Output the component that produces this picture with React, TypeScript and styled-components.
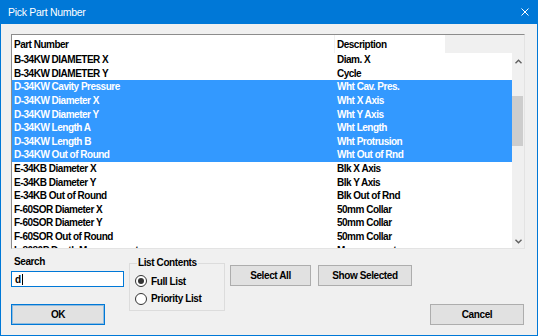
import styled, { createGlobalStyle } from "styled-components"

const GlobalStyle = createGlobalStyle`
  html, body {
    margin: 0;
    padding: 0;
    background: #f0f0f0;
  }
  * {
    box-sizing: border-box;
  }
`

const Window = styled.div`
  width: 538px;
  height: 336px;
  display: flex;
  flex-direction: column;
  background-color: #f0f0f0;
  border: 1px solid #0078d7;
  border-top: 0;
  font-family: "Liberation Sans", Arial, sans-serif;
  font-size: 10px;
  color: #000;
  overflow: hidden;
`

const TitleBar = styled.div`
  height: 24px;
  flex-shrink: 0;
  display: flex;
  align-items: center;
  justify-content: space-between;
  background-color: #0078d7;
  color: #ffffff;
  padding: 0 8px 0 7px;
  font-size: 10.5px;
  letter-spacing: -0.3px;
`

const Client = styled.div`
  flex: 1;
  display: flex;
  flex-direction: column;
  padding: 10px 12px 0 10px;
`

const ListBox = styled.div`
  height: 215px;
  flex-shrink: 0;
  display: flex;
  flex-direction: column;
  border: 1px solid;
  border-color: #8c8c8c #e3e3e3 #e3e3e3 #8c8c8c;
  background-color: #ffffff;
  font-weight: bold;
  letter-spacing: -0.5px;
`

const HeaderRow = styled.div`
  height: 18px;
  flex-shrink: 0;
  display: flex;
  background-color: #f0f0f0;
`

const HeaderCell = styled.div<{ $width: number }>`
  width: ${(p) => p.$width}px;
  display: flex;
  align-items: center;
  padding-left: 2px;
  background-color: #ffffff;
  border-right: 1px solid #f0f0f0;
`

const Body = styled.div`
  flex: 1;
  display: flex;
  min-height: 0;
`

const Rows = styled.div`
  flex: 1;
  overflow: hidden;
`

const Row = styled.div<{ $selected?: boolean }>`
  height: 13.6px;
  display: flex;
  align-items: center;
  white-space: nowrap;
  background-color: ${(p) => (p.$selected ? "#3399ff" : "transparent")};
  color: ${(p) => (p.$selected ? "#ffffff" : "#000000")};
`

const Cell = styled.div<{ $width?: number }>`
  ${(p) => (p.$width ? `width: ${p.$width}px;` : "flex: 1;")}
  padding-left: 2px;
  overflow: hidden;
`

const ScrollBar = styled.div`
  width: 12px;
  display: flex;
  flex-direction: column;
  background-color: #f0f0f0;
`

const ArrowButton = styled.div<{ $h: number }>`
  height: ${(p) => p.$h}px;
  display: flex;
  align-items: center;
  justify-content: center;
`

const Track = styled.div`
  flex: 1;
`

const Thumb = styled.div`
  margin-top: 27px;
  height: 50px;
  width: 11px;
  background-color: #cdcdcd;
`

const Bottom = styled.div`
  flex: 1;
  display: flex;
  font-weight: bold;
  letter-spacing: -0.4px;
`

const SearchCol = styled.div`
  width: 113px;
  display: flex;
  flex-direction: column;
  padding-top: 7px;
`

const Label = styled.div`
  line-height: 12px;
  height: 12px;
  padding-left: 3px;
`

const SearchBox = styled.div`
  margin-top: 3px;
  height: 16px;
  display: flex;
  align-items: center;
  padding-left: 3px;
  border: 1px solid #0078d7;
  background-color: #ffffff;
`

const Caret = styled.span`
  display: inline-block;
  width: 1px;
  height: 11px;
  margin-left: 1px;
  background-color: #000;
`

const Button = styled.div<{ $width: number; $default?: boolean }>`
  width: ${(p) => p.$width}px;
  height: 21px;
  display: flex;
  align-items: center;
  justify-content: center;
  background-color: #e1e1e1;
  border: 1px solid ${(p) => (p.$default ? "#0078d7" : "#adadad")};
  ${(p) => (p.$default ? "box-shadow: inset 0 0 0 1px rgba(0, 120, 215, 0.35);" : "")}
`

const OkButton = styled(Button)`
  margin-top: 17px;
`

const GroupBox = styled.fieldset`
  margin: 8px 0 0 5px;
  width: 96px;
  height: 54px;
  padding: 0 0 0 5px;
  border: 1px solid #dcdcdc;
`

const Legend = styled.legend`
  padding: 0 1px;
  margin-left: 2px;
  line-height: 12px;
`

const RadioList = styled.div`
  display: flex;
  flex-direction: column;
  gap: 3.6px;
  margin-top: 5px;
`

const RadioRow = styled.div`
  height: 14px;
  display: flex;
  align-items: center;
  gap: 4px;
`

const RadioCircle = styled.div<{ $checked?: boolean }>`
  width: 12px;
  height: 12px;
  border-radius: 50%;
  border: 1px solid #333333;
  background-color: #ffffff;
  display: flex;
  align-items: center;
  justify-content: center;
  &::after {
    content: "";
    width: 6px;
    height: 6px;
    border-radius: 50%;
    background-color: ${(p) => (p.$checked ? "#333333" : "transparent")};
  }
`

const ActionCol = styled.div`
  flex: 1;
  display: flex;
  flex-direction: column;
  margin-left: 5px;
  padding-top: 16px;
`

const ButtonRow = styled.div`
  display: flex;
  gap: 7px;
`

const CancelButton = styled(Button)`
  margin-top: 18px;
  align-self: flex-end;
  margin-right: 1px;
`

const parts = [
  { part: "B-34KW DIAMETER X", desc: "Diam. X" },
  { part: "B-34KW DIAMETER Y", desc: "Cycle" },
  { part: "D-34KW Cavity Pressure", desc: "Wht Cav. Pres.", selected: true },
  { part: "D-34KW Diameter X", desc: "Wht X Axis", selected: true },
  { part: "D-34KW Diameter Y", desc: "Wht Y Axis", selected: true },
  { part: "D-34KW Length A", desc: "Wht Length", selected: true },
  { part: "D-34KW Length B", desc: "Wht Protrusion", selected: true },
  { part: "D-34KW Out of Round", desc: "Wht Out of Rnd", selected: true },
  { part: "E-34KB Diameter X", desc: "Blk X Axis" },
  { part: "E-34KB Diameter Y", desc: "Blk Y Axis" },
  { part: "E-34KB Out of Round", desc: "Blk Out of Rnd" },
  { part: "F-60SOR Diameter X", desc: "50mm Collar" },
  { part: "F-60SOR Diameter Y", desc: "50mm Collar" },
  { part: "F-60SOR Out of Round", desc: "50mm Collar" },
  { part: "L-8080P Depth Measurement", desc: "Measurement" },
]

function Chevron({ up }: { up?: boolean }) {
  return (
    <svg width="7" height="5" viewBox="0 0 7 5">
      <path
        d={up ? "M0.5 4.2 L3.5 1.2 L6.5 4.2" : "M0.5 0.8 L3.5 3.8 L6.5 0.8"}
        fill="none"
        stroke="#606060"
        strokeWidth="1.4"
      />
    </svg>
  )
}

function App() {
  return (
    <>
      <GlobalStyle />
      <Window>
        <TitleBar>
          <span>Pick Part Number</span>
          <svg width="8" height="8" viewBox="0 0 8 8">
            <path d="M0.5 0.5 L7.5 7.5 M7.5 0.5 L0.5 7.5" stroke="#fff" strokeWidth="1" />
          </svg>
        </TitleBar>
        <Client>
          <ListBox>
            <HeaderRow>
              <HeaderCell $width={323}>Part Number</HeaderCell>
              <HeaderCell $width={111}>Description</HeaderCell>
            </HeaderRow>
            <Body>
              <Rows>
                {parts.map((p, i) => (
                  <Row key={i} $selected={p.selected}>
                    <Cell $width={323}>{p.part}</Cell>
                    <Cell>{p.desc}</Cell>
                  </Row>
                ))}
              </Rows>
              <ScrollBar>
                <ArrowButton $h={16}>
                  <Chevron up />
                </ArrowButton>
                <Track>
                  <Thumb />
                </Track>
                <ArrowButton $h={13}>
                  <Chevron />
                </ArrowButton>
              </ScrollBar>
            </Body>
          </ListBox>
          <Bottom>
            <SearchCol>
              <Label>Search</Label>
              <SearchBox>
                d<Caret />
              </SearchBox>
              <OkButton $width={94} $default>
                OK
              </OkButton>
            </SearchCol>
            <GroupBox>
              <Legend>List Contents</Legend>
              <RadioList>
                <RadioRow>
                  <RadioCircle $checked />
                  Full List
                </RadioRow>
                <RadioRow>
                  <RadioCircle />
                  Priority List
                </RadioRow>
              </RadioList>
            </GroupBox>
            <ActionCol>
              <ButtonRow>
                <Button $width={81}>Select All</Button>
                <Button $width={94}>Show Selected</Button>
              </ButtonRow>
              <CancelButton $width={94}>Cancel</CancelButton>
            </ActionCol>
          </Bottom>
        </Client>
      </Window>
    </>
  )
}

export default App
